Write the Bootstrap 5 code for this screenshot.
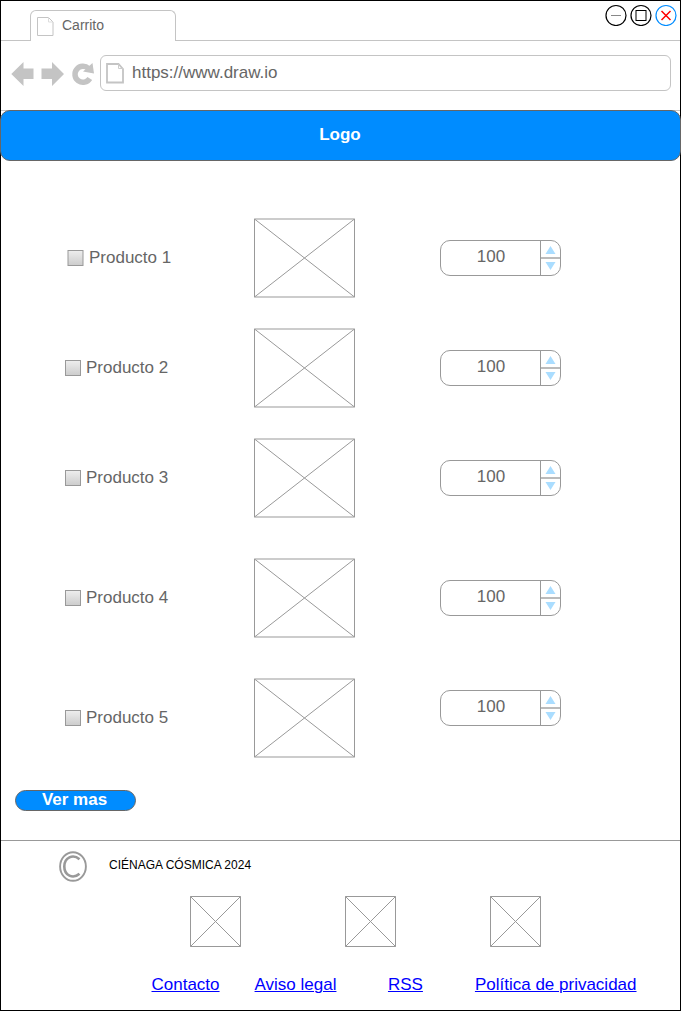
<!DOCTYPE html>
<html lang="es">
<head>
<meta charset="utf-8">
<meta name="viewport" content="width=device-width, initial-scale=1">
<title>Carrito</title>
<link href="https://cdn.jsdelivr.net/npm/bootstrap@5.3.0/dist/css/bootstrap.min.css" rel="stylesheet">
<style>
body{font-family:"Liberation Sans",Arial,sans-serif;font-size:17px;line-height:20px;color:#666;background:#fff}
svg{display:block;flex:none}
.win{width:681px;height:1011px;border:1px solid #000}
.tabbar{height:40px;border-bottom:1px solid #c4c4c4}
.tab-on{width:146px;height:31px;margin:9px 0 0 29px;padding-left:6px;border:1px solid #c4c4c4;border-bottom:0;border-radius:6px 6px 0 0;background:#fff;font-size:14px}
.tab-on svg{margin-top:1px}
.tab-on span{margin:-2px 0 0 8px}
.winbtns{margin:3px 3px 0 0;gap:3px}
.tools{height:70px;border-bottom:1px solid #c4c4c4;padding:0 9px 5px 9px}
.addr{height:36px;margin-left:5px;border:1px solid #c4c4c4;border-radius:6px;padding-left:5px}
.addr span{margin:-1px 0 0 7px}
.logo-bar{height:51px;margin:-1px -1px 0;background:#008cff;border:1px solid #666;border-radius:10px;color:#fff;padding:0 1px 2px 0}
.products{padding-top:57px;height:629px}
.item{height:80px;margin-bottom:30px;padding-left:64px}
.item.wide{margin-bottom:40px}
.item-name{width:189px;gap:5px}
.item-name span{margin-top:-1px}
.item:first-child .item-name{padding-left:2px}
.stepper{width:121px;height:36px;margin-left:85px;border:1px solid #999;border-radius:10px;overflow:hidden}
.stepper.up{margin-top:-20px}
.stepper span{width:99px;padding:0 0 3px 2px}
.more{height:50px}
.btn-more{width:121px;height:21px;margin-left:14px;padding:0 2px 2px 0;border:1px solid #666;border-radius:11px;background:#008cff;color:#fff;font-size:17px;line-height:17px;font-weight:700}
.foot{height:170px;border-top:1px solid #999}
.copy{height:55px;padding:0 0 5px 58px;gap:21px;font-size:12px;color:#000}
.copy span{margin-top:-2px}
.thumbs{padding-left:189px}
.thumbs svg+svg{margin-left:104px}
.thumbs svg:last-child{margin-left:94px}
.links{padding:28px 0 0 150.5px}
.links a{color:#00f;text-decoration:underline 1px;white-space:nowrap}
.links a:nth-child(2){margin:0 51.5px 0 35px}
.links a:nth-child(3){margin-right:52px}
</style>
</head>
<body>
<svg width="0" height="0" class="position-absolute">
  <defs>
    <linearGradient id="g" x1="0" y1="0" x2="0" y2="1"><stop offset="0" stop-color="#eee"/><stop offset="1" stop-color="#ccc"/></linearGradient>
    <symbol id="box" viewBox="0 0 16 16"><rect x=".5" y=".5" width="15" height="15" fill="url(#g)" stroke="#999"/></symbol>
    <symbol id="pic" viewBox="0 0 101 80"><path d="M.5 1H100.500V79H.5ZL100.500 79M100.500 1L.5 79" fill="none" stroke="#999"/></symbol>
    <symbol id="thumb" viewBox="0 0 51 51"><path d="M.5 .5H50.500V50.500H.5ZL50.500 50.500M50.500 .5L.5 50.500" fill="none" stroke="#999"/></symbol>
    <symbol id="arrows" viewBox="0 0 21 34"><path d="M1.500 0V34" stroke="#999"/><path d="M2 17H21" stroke="#bbb" stroke-width="2"/><path d="M6.500 13L11.500 5L16.500 13ZM6.500 21L11.500 29L16.500 21Z" fill="#aaddff"/></symbol>
  </defs>
</svg>
<div class="win d-flex flex-column">
  <div class="tabbar d-flex justify-content-between flex-shrink-0">
    <div class="tab-on d-flex align-items-center">
      <svg width="17" height="20" viewBox="0 0 17 20" fill="none"><path d="M.5 .5H11.500L16 5V18.500H.5Z" stroke="#c4c4c4"/><path d="M11.500 .5V5H16" stroke="#ddd"/></svg>
      <span>Carrito</span>
    </div>
    <div class="winbtns d-flex">
      <svg width="22" height="22" fill="none"><circle cx="11" cy="11.500" r="10" stroke="#000" stroke-width="1.200"/><path d="M6 11.500H16" stroke="#888"/></svg>
      <svg width="22" height="22" fill="none"><circle cx="11" cy="11.500" r="10" stroke="#000" stroke-width="1.200"/><rect x="6" y="6.500" width="10" height="10" stroke="#000"/></svg>
      <svg width="22" height="22" fill="none"><circle cx="11" cy="11.500" r="10" stroke="#008cff" stroke-width="1.200"/><path d="M6.500 7L15.500 16M15.500 7L6.500 16" stroke="#f00" stroke-width="1.500"/></svg>
    </div>
  </div>
  <div class="tools d-flex align-items-center flex-shrink-0">
    <svg width="85" height="26" viewBox="0 0 85 26"><path d="M1.300 14L13.500 2V8.500H23.500V19H13.500V26ZM54 14L42 2V8.500H31.500V19H42V26Z" fill="#c4c4c4"/><path d="M79.800 18.500A8 8 0 1 1 78.500 8.500" fill="none" stroke="#c4c4c4" stroke-width="5.500"/><path d="M73 11.500L82.500 3L84 13.500Z" fill="#c4c4c4"/></svg>
    <div class="addr d-flex align-items-center flex-grow-1">
      <svg width="19" height="22" viewBox="0 0 19 22" fill="none"><path d="M1 2H12.500L17 7V20.500H1Z" stroke="#c4c4c4" stroke-width="1.800"/><path d="M12.500 2V6.500H17" stroke="#ccc"/></svg>
      <span>https://www.draw.io</span>
    </div>
  </div>
  <div class="logo-bar d-flex align-items-center justify-content-center flex-shrink-0 fw-bold">Logo</div>
  <main class="products flex-shrink-0">
    <div class="item d-flex align-items-center">
      <div class="item-name d-flex align-items-center"><svg width="17" height="16" viewBox="-.5 0 17 16"><rect x=".5" y=".5" width="15" height="15" fill="url(#g)" stroke="#999"/></svg><span>Producto 1</span></div>
      <svg width="101" height="80"><use href="#pic"/></svg>
      <div class="stepper d-flex"><span class="d-flex align-items-center justify-content-center">100</span><svg width="21" height="34"><use href="#arrows"/></svg></div>
    </div>
    <div class="item d-flex align-items-center">
      <div class="item-name d-flex align-items-center"><svg width="16" height="16"><use href="#box"/></svg><span>Producto 2</span></div>
      <svg width="101" height="80"><use href="#pic"/></svg>
      <div class="stepper d-flex"><span class="d-flex align-items-center justify-content-center">100</span><svg width="21" height="34"><use href="#arrows"/></svg></div>
    </div>
    <div class="item wide d-flex align-items-center">
      <div class="item-name d-flex align-items-center"><svg width="16" height="16"><use href="#box"/></svg><span>Producto 3</span></div>
      <svg width="101" height="80"><use href="#pic"/></svg>
      <div class="stepper d-flex"><span class="d-flex align-items-center justify-content-center">100</span><svg width="21" height="34"><use href="#arrows"/></svg></div>
    </div>
    <div class="item wide d-flex align-items-center">
      <div class="item-name d-flex align-items-center"><svg width="16" height="16"><use href="#box"/></svg><span>Producto 4</span></div>
      <svg width="101" height="80"><use href="#pic"/></svg>
      <div class="stepper d-flex"><span class="d-flex align-items-center justify-content-center">100</span><svg width="21" height="34"><use href="#arrows"/></svg></div>
    </div>
    <div class="item wide d-flex align-items-center">
      <div class="item-name d-flex align-items-center"><svg width="16" height="16"><use href="#box"/></svg><span>Producto 5</span></div>
      <svg width="101" height="80"><use href="#pic"/></svg>
      <div class="stepper up d-flex"><span class="d-flex align-items-center justify-content-center">100</span><svg width="21" height="34"><use href="#arrows"/></svg></div>
    </div>
  </main>
  <div class="more d-flex"><button type="button" class="btn btn-more">Ver mas</button></div>
  <footer class="foot flex-shrink-0">
    <div class="copy d-flex align-items-center">
      <svg width="29" height="31" viewBox="0 0 29 31" fill="none" stroke="#999"><ellipse cx="14" cy="15.500" rx="12.900" ry="14.300" stroke-width="1.900"/><path d="M20.500 8.300C14 2.500 5.300 6.500 5.300 15.500S14 28.500 20.500 22.700" stroke-width="2.600"/></svg>
      <span>CIÉNAGA CÓSMICA 2024</span>
    </div>
    <div class="thumbs d-flex"><svg width="51" height="51"><use href="#thumb"/></svg><svg width="51" height="51"><use href="#thumb"/></svg><svg width="51" height="51"><use href="#thumb"/></svg></div>
    <nav class="links d-flex"><a href="#">Contacto</a><a href="#">Aviso legal</a><a href="#">RSS</a><a href="#">Política de privacidad</a></nav>
  </footer>
</div>
<script src="https://cdn.jsdelivr.net/npm/bootstrap@5.3.0/dist/js/bootstrap.bundle.min.js"></script>
</body>
</html>
